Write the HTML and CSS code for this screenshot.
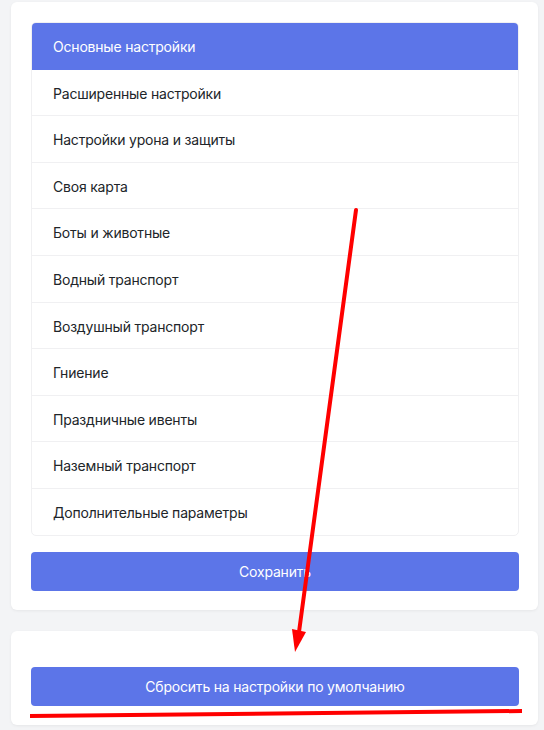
FILE: index.html
```html
<!DOCTYPE html>
<html lang="ru">
<head>
<meta charset="utf-8">
<title>Настройки</title>
<link rel="stylesheet" href="styles.css">
</head>
<body>
<div class="page">
  <section class="card card-main">
    <ul class="menu">
      <li class="menu-item active">Основные настройки</li>
      <li class="menu-item">Расширенные настройки</li>
      <li class="menu-item">Настройки урона и защиты</li>
      <li class="menu-item">Своя карта</li>
      <li class="menu-item">Боты и животные</li>
      <li class="menu-item">Водный транспорт</li>
      <li class="menu-item">Воздушный транспорт</li>
      <li class="menu-item">Гниение</li>
      <li class="menu-item">Праздничные ивенты</li>
      <li class="menu-item">Наземный транспорт</li>
      <li class="menu-item">Дополнительные параметры</li>
    </ul>
    <button class="btn">Сохранить</button>
  </section>
  <section class="card card-reset">
    <button class="btn">Сбросить на настройки по умолчанию</button>
  </section>
</div>
<svg class="annot" width="544" height="730" viewBox="0 0 544 730">
  <line x1="356" y1="210" x2="299" y2="632" stroke="#ff0000" stroke-width="4" stroke-linecap="round"/>
  <polygon points="292,629 306,632 295,652" fill="#ff0000"/>
  <line x1="30" y1="716" x2="522" y2="711" stroke="#ff0000" stroke-width="4"/>
</svg>
</body>
</html>
```
FILE: styles.css
```css
html, body {
  margin: 0;
  padding: 0;
}
body {
  background: #f3f4f6;
  font-family: Inter, "Noto Sans", sans-serif;
  font-size: 14px;
  letter-spacing: -0.2px;
  color: #212529;
  width: 544px;
  height: 730px;
  overflow: hidden;
  position: relative;
}
.page {
  padding: 2px 6px 0 11px;
  display: flex;
  flex-direction: column;
  gap: 21px;
}
.card {
  background: #ffffff;
  border-radius: 6px;
  box-shadow: 0 1px 3px rgba(0, 0, 0, 0.06);
  width: 527px;
  box-sizing: border-box;
}
.card-main {
  padding: 20px 19px 19px 20px;
}
.card-reset {
  padding: 36px 19px 19px 20px;
}
.menu {
  list-style: none;
  margin: 0 0 16px 0;
  padding: 0;
  border: 1px solid #f0f0f2;
  border-radius: 5px;
  overflow: hidden;
}
.menu-item {
  padding: 13px 21px 11px 21px;
  line-height: 21.6px;
  border-bottom: 1px solid #f0f0f2;
  color: #212529;
}
.menu-item:last-child {
  border-bottom: none;
}
.menu-item.active {
  background: #5c75e8;
  color: #ffffff;
  border-bottom-color: #5c75e8;
  margin: -1px -1px 0 -1px;
  padding: 14px 22px 11px 22px;
}
.btn {
  display: block;
  width: 100%;
  height: 39px;
  border: none;
  border-radius: 4px;
  background: #5c75e8;
  color: #ffffff;
  font-family: Inter, "Noto Sans", sans-serif;
  font-size: 14px;
  letter-spacing: -0.2px;
  cursor: pointer;
}
.annot {
  position: absolute;
  left: 0;
  top: 0;
  pointer-events: none;
}
```
